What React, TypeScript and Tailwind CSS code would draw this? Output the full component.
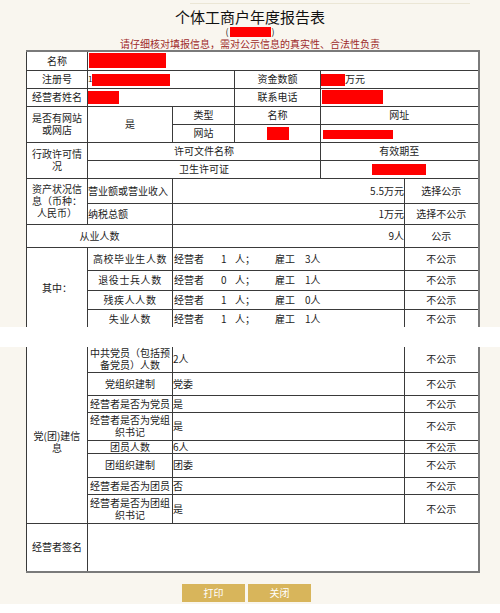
const cell = "border border-[#3a3a3a] p-0 text-center align-middle leading-[12px]";
const lab = "border border-[#3a3a3a] px-[4px] py-0 text-center align-middle leading-[12px]";

const Red = ({ w, h, className = "" }: { w: string; h: string; className?: string }) => (
  <span className={`inline-block align-middle bg-[#ff0000] ${w} ${h} ${className}`} />
);

const employRows = [
  { name: "高校毕业生人数", boss: "1", staff: "3人", h: "h-[23px]" },
  { name: "退役士兵人数", boss: "0", staff: "1人", h: "h-[20px]" },
  { name: "残疾人人数", boss: "1", staff: "0人", h: "h-[19px]" },
  { name: "失业人数", boss: "1", staff: "1人", h: "h-[19px]" },
];

const partyRows = [
  { name: "中共党员（包括预备党员）人数", value: "2人", h: "h-[25px]" },
  { name: "党组织建制", value: "党委", h: "h-[23px]" },
  { name: "经营者是否为党员", value: "是", h: "h-[17px]" },
  { name: "经营者是否为党组织书记", value: "是", h: "h-[28px]" },
  { name: "团员人数", value: "6人", h: "h-[13px]" },
  { name: "团组织建制", value: "团委", h: "h-[24px]" },
  { name: "经营者是否为团员", value: "否", h: "h-[17px]" },
  { name: "经营者是否为团组织书记", value: "是", h: "h-[29px]" },
];

export default function App() {
  return (
    <div className="w-[500px] h-[613px] overflow-hidden bg-white text-[10px] text-[#1c1c1c] font-['Noto_Sans_CJK_SC',sans-serif]">
      {/* top part of the form */}
      <section className="h-[327px] overflow-hidden bg-[#f9f6ef]">
        <div className="ml-[190px] mt-[3px] h-px w-[280px] bg-[#ebe6d5]" />
        <h1 className="mt-[5px] text-center text-[15px] leading-[16px] text-[#111]">个体工商户年度报告表</h1>
        <div className="mt-[1px] flex h-[11px] items-center justify-center gap-[1px] text-[9px] leading-[10px]">
          <span>(</span>
          <Red w="w-[41px]" h="h-[10px]" />
          <span>)</span>
        </div>
        <p className="mt-[1px] text-center text-[10px] leading-[11px] text-[#9e2a2a]">
          请仔细核对填报信息，需对公示信息的真实性、合法性负责
        </p>
        <table className="ml-[26px] mt-[1px] w-[452px] table-fixed border-collapse border-t-2 border-r-2 border-[#7a7a7a] bg-white">
          <colgroup>
            <col className="w-[61px]" />
            <col className="w-[85px]" />
            <col className="w-[62px]" />
            <col className="w-[86px]" />
            <col className="w-[84px]" />
            <col className="w-[74px]" />
          </colgroup>
          <tbody>
            <tr className="h-[19px]">
              <td className={lab}>名称</td>
              <td className={`${cell} text-left`} colSpan={5}>
                <Red w="w-[77px]" h="h-[15px]" className="ml-[1px]" />
              </td>
            </tr>
            <tr className="h-[18px]">
              <td className={lab}>注册号</td>
              <td className={`${cell} text-left`} colSpan={2}>
                <span className="align-middle text-[8px]">1</span>
                <Red w="w-[78px]" h="h-[12px]" />
              </td>
              <td className={cell}>资金数额</td>
              <td className={`${cell} text-left`} colSpan={2}>
                <Red w="w-[24px]" h="h-[12px]" />
                <span className="align-middle">万元</span>
              </td>
            </tr>
            <tr className="h-[18px]">
              <td className={lab}>经营者姓名</td>
              <td className={`${cell} text-left`} colSpan={2}>
                <Red w="w-[31px]" h="h-[13px]" />
              </td>
              <td className={cell}>联系电话</td>
              <td className={`${cell} text-left`} colSpan={2}>
                <Red w="w-[61px]" h="h-[14px]" className="ml-[1px]" />
              </td>
            </tr>
            <tr className="h-[18px]">
              <td className={lab} rowSpan={2}>是否有网站或网店</td>
              <td className={cell} rowSpan={2}>是</td>
              <td className={cell}>类型</td>
              <td className={cell}>名称</td>
              <td className={cell} colSpan={2}>网址</td>
            </tr>
            <tr className="h-[18px]">
              <td className={cell}>网站</td>
              <td className={cell}>
                <Red w="w-[22px]" h="h-[13px]" />
              </td>
              <td className={`${cell} text-left`} colSpan={2}>
                <Red w="w-[70px]" h="h-[9px]" className="ml-[2px]" />
              </td>
            </tr>
            <tr className="h-[18px]">
              <td className={lab} rowSpan={2}>行政许可情况</td>
              <td className={cell} colSpan={3}>许可文件名称</td>
              <td className={cell} colSpan={2}>有效期至</td>
            </tr>
            <tr className="h-[18px]">
              <td className={cell} colSpan={3}>卫生许可证</td>
              <td className={cell} colSpan={2}>
                <Red w="w-[54px]" h="h-[11px]" />
              </td>
            </tr>
            <tr className="h-[25px]">
              <td className={lab} rowSpan={2}>资产状况信息（币种：人民币）</td>
              <td className={`${cell} text-left`}>营业额或营业收入</td>
              <td className={`${cell} text-right`} colSpan={3}>5.5万元</td>
              <td className={cell}>选择公示</td>
            </tr>
            <tr className="h-[21px]">
              <td className={`${cell} text-left`}>纳税总额</td>
              <td className={`${cell} text-right`} colSpan={3}>1万元</td>
              <td className={cell}>选择不公示</td>
            </tr>
            <tr className="h-[23px]">
              <td className={cell} colSpan={2}>从业人数</td>
              <td className={`${cell} text-right`} colSpan={3}>9人</td>
              <td className={cell}>公示</td>
            </tr>
            {employRows.map((r, i) => (
              <tr key={r.name} className={r.h}>
                {i === 0 && (
                  <td className={lab} rowSpan={4}>其中：</td>
                )}
                <td className={`${cell} tracking-[0.6px]`}>{r.name}</td>
                <td className={`${cell} text-left`} colSpan={3}>
                  <div className="flex items-center pl-[1px]">
                    <span className="w-[47px]">经营者</span>
                    <span className="w-[14px]">{r.boss}</span>
                    <span className="w-[40px]">人；</span>
                    <span className="w-[30px]">雇工</span>
                    <span>{r.staff}</span>
                  </div>
                </td>
                <td className={cell}>不公示</td>
              </tr>
            ))}
          </tbody>
        </table>
      </section>

      <div className="h-[20px] bg-white" />

      {/* second part of the form */}
      <section className="h-[257px] bg-[#f9f6ef]">
        <table className="ml-[26px] w-[452px] table-fixed border-collapse border-r-2 border-b-2 border-[#7a7a7a] bg-white">
          <colgroup>
            <col className="w-[61px]" />
            <col className="w-[85px]" />
            <col className="w-[232px]" />
            <col className="w-[74px]" />
          </colgroup>
          <tbody>
            {partyRows.map((r, i) => (
              <tr key={r.name} className={r.h}>
                {i === 0 && (
                  <td className={`${lab} border-t-0 pt-[14px]`} rowSpan={8}>党(团)建信息</td>
                )}
                <td className={`${cell} px-[1px] ${i === 0 ? "border-t-0" : ""}`}>{r.name}</td>
                <td className={`${cell} text-left ${i === 0 ? "border-t-0" : ""}`}>{r.value}</td>
                <td className={`${cell} ${i === 0 ? "border-t-0" : ""}`}>不公示</td>
              </tr>
            ))}
            <tr className="h-[49px]">
              <td className={lab}>经营者签名</td>
              <td className={cell} colSpan={3} />
            </tr>
          </tbody>
        </table>
        <div className="mt-[11px] flex justify-center gap-[3px] pr-[7px]">
          <button className="h-[18px] w-[63px] bg-[#d8b55b] text-[10px] leading-[18px] text-white">打印</button>
          <button className="h-[18px] w-[63px] bg-[#d8b55b] text-[10px] leading-[18px] text-white">关闭</button>
        </div>
      </section>
    </div>
  );
}
